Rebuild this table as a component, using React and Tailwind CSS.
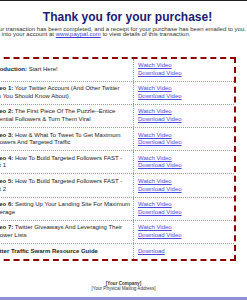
import React from "react";

const rows = [
  { label: "Introduction:", lines: [" Start Here!"], links: ["Watch Video", "Download Video"] },
  { label: "Video 1:", lines: [" Your Twitter Account (And Other Twitter", "Tips You Should Know About)"], links: ["Watch Video", "Download Video"] },
  { label: "Video 2:", lines: [" The First Piece Of The Puzzle--Entice", "Potential Followers & Turn Them Viral"], links: ["Watch Video", "Download Video"] },
  { label: "Video 3:", lines: [" How & What To Tweet To Get Maximum", "Followers And Targeted Traffic"], links: ["Watch Video", "Download Video"] },
  { label: "Video 4:", lines: [" How To Build Targeted Followers FAST -", "Part 1"], links: ["Watch Video", "Download Video"] },
  { label: "Video 5:", lines: [" How To Build Targeted Followers FAST -", "Part 2"], links: ["Watch Video", "Download Video"] },
  { label: "Video 6:", lines: [" Setting Up Your Landing Site For Maximum", "Leverage"], links: ["Watch Video", "Download Video"] },
  { label: "Video 7:", lines: [" Twitter Giveaways And Leveraging Their", "Follower Lists"], links: ["Watch Video", "Download Video"] },
  { label: "Twitter Traffic Swarm Resource Guide", lines: [], links: ["Download"] },
];

function Row({ row, last }) {
  return (
    <div className={`grid grid-cols-[148px_1fr] ${last ? "" : "border-b border-dotted border-[#cc8f8f]"}`}>
      <div className="flex items-center border-r border-dotted border-[#cc8f8f] pl-[4px] py-[3.5px] text-[#222] whitespace-nowrap">
        <div>
          <span className="font-bold">{row.label}</span>
          {row.lines[0]}
          {row.lines[1] && (
            <>
              <br />
              {row.lines[1]}
            </>
          )}
        </div>
      </div>
      <div className="flex flex-col justify-center pl-[4px] py-[3.5px]">
        {row.links.map((l) => (
          <a key={l} href="#" className="text-[#4a4ae0] underline w-fit">
            {l}
          </a>
        ))}
      </div>
    </div>
  );
}

export default function App() {
  return (
    <div className="w-[247px] h-[300px] overflow-hidden bg-white border-t border-[#222] flex flex-col font-['Liberation_Sans',Arial,sans-serif]">
      <div className="-ml-[20px] w-[295px] shrink-0">
        <h1 className="mt-[9px] text-center text-[12px] leading-[14px] font-bold text-[#1b1b73]">
          Thank you for your purchase!
        </h1>
        <p className="mt-[2.5px] pl-[12px] text-[6px] leading-[5.5px] text-[#333] whitespace-nowrap">
          Your transaction has been completed, and a receipt for your purchase has been emailed to you. You may
          <br />
          log into your account at{" "}
          <a href="#" className="text-[#3b3bd6] underline">
            www.paypal.com
          </a>{" "}
          to view details of this transaction.
        </p>
        <div className="mt-[19px] ml-[4px] w-[252px] border-2 border-dashed border-[#8b0000] text-[6px] leading-[7.6px]">
          {rows.map((r, i) => (
            <Row key={i} row={r} last={i === rows.length - 1} />
          ))}
        </div>
      </div>
      <div className="mt-[20px] text-center text-[4.6px] leading-[5px] text-[#333]">
        <div className="font-bold">[Your Company]</div>
        <div>[Your Physical Mailing Address]</div>
      </div>
      <div className="mt-auto h-[3px] bg-[#8f8fd8]" />
    </div>
  );
}
